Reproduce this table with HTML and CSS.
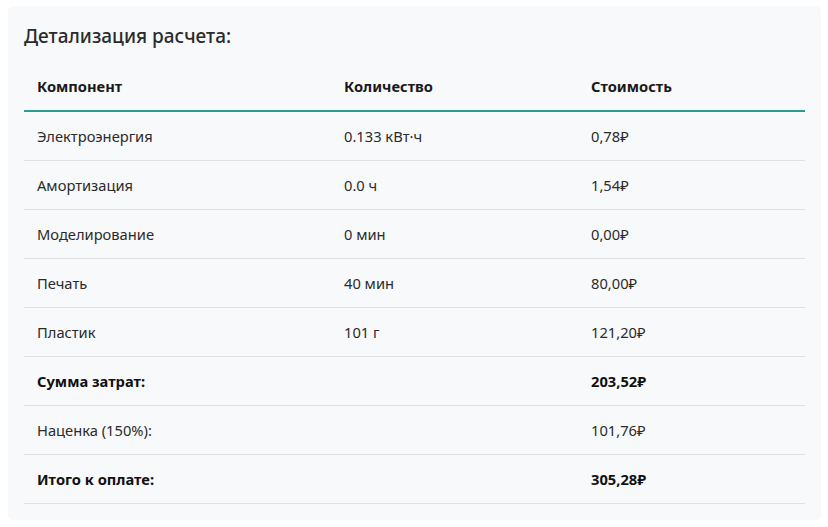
FILE: index.html
```html
<!DOCTYPE html>
<html lang="ru">
<head>
<meta charset="utf-8">
<title>Детализация расчета</title>
<link rel="stylesheet" href="styles.css">
</head>
<body>
<div class="card">
  <h3 class="title">Детализация расчета:</h3>
  <table class="details">
    <colgroup>
      <col class="c1">
      <col class="c2">
      <col class="c3">
    </colgroup>
    <thead>
      <tr><th>Компонент</th><th>Количество</th><th>Стоимость</th></tr>
    </thead>
    <tbody>
      <tr><td>Электроэнергия</td><td>0.133 кВт·ч</td><td>0,78₽</td></tr>
      <tr><td>Амортизация</td><td>0.0 ч</td><td>1,54₽</td></tr>
      <tr><td>Моделирование</td><td>0 мин</td><td>0,00₽</td></tr>
      <tr><td>Печать</td><td>40 мин</td><td>80,00₽</td></tr>
      <tr><td>Пластик</td><td>101 г</td><td>121,20₽</td></tr>
      <tr class="strong"><td>Сумма затрат:</td><td></td><td>203,52₽</td></tr>
      <tr><td>Наценка (150%):</td><td></td><td>101,76₽</td></tr>
      <tr class="strong"><td>Итого к оплате:</td><td></td><td>305,28₽</td></tr>
    </tbody>
  </table>
</div>
</body>
</html>
```
FILE: styles.css
```css
html, body {
  background: #ffffff;
}
body {
  margin: 6px 7px 0 8px;
  font-family: "Noto Sans", "Open Sans", "DejaVu Sans", sans-serif;
  color: #212529;
}
.card {
  background: #f8f9fa;
  border-radius: 5px;
  padding: 18px 16px 16px;
  width: 781px;
}
.title {
  margin: 0 0 15px;
  font-size: 19px;
  line-height: 24px;
  font-weight: 500;
  color: #2b2b2b;
}
.details {
  width: 100%;
  border-collapse: collapse;
  font-size: 14.7px;
}
.c1 { width: 307px; }
.c2 { width: 247px; }
.details th {
  text-align: left;
  font-weight: 700;
  color: #1a1a1a;
  padding: 11px 12px 12px 13px;
  line-height: 24px;
  border-bottom: 2px solid #2a9d8f;
}
.details td {
  padding: 12px 12px 12px 13px;
  line-height: 24px;
  border-bottom: 1px solid #dee2e6;
  color: #2b2b2b;
}
.details tr.strong td {
  font-weight: 700;
  color: #111;
}
```
